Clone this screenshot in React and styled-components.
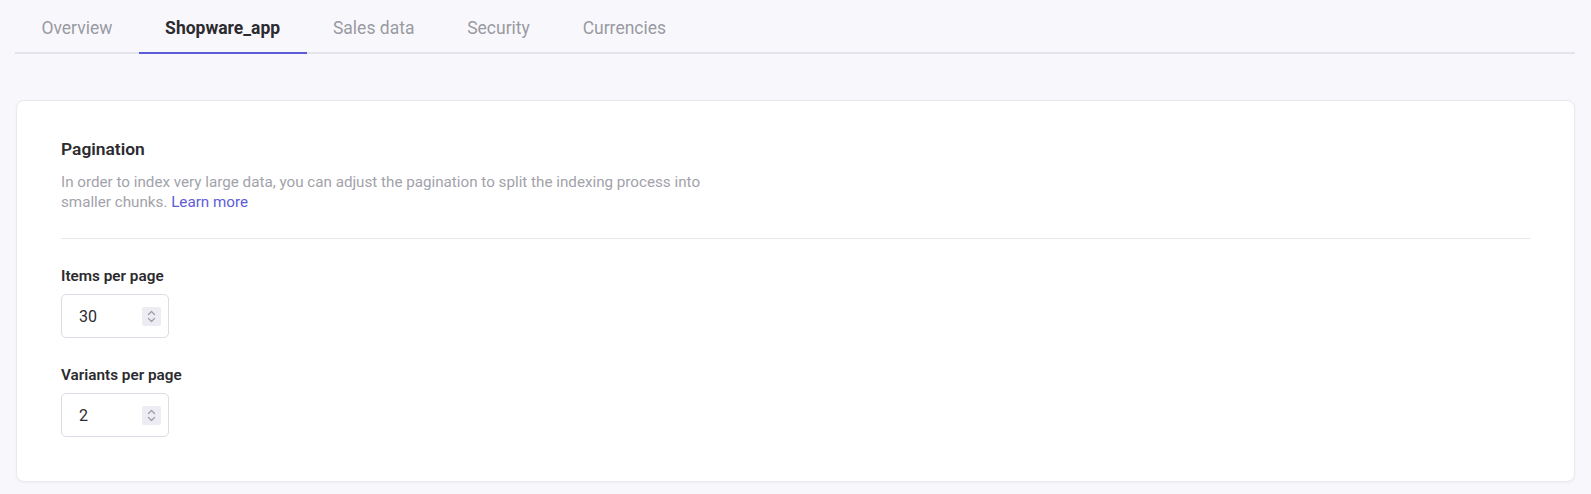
import React from "react";
import styled, { createGlobalStyle } from "styled-components";

const Global = createGlobalStyle`
  html, body { margin: 0; padding: 0; background: #f8f8fc; }
  body { font-family: Roboto, "Liberation Sans", Arial, sans-serif; color: #2d2d33; }
  * { box-sizing: border-box; }
`;

const Page = styled.div`
  padding: 10px 16px 13px 15px;
  display: flex;
  flex-direction: column;
  gap: 46px;
`;

const TabBar = styled.nav`
  display: flex;
  border-bottom: 2px solid #e4e4ec;
  height: 44px;
`;

const Tab = styled.div`
  padding: 0 26.4px;
  font-size: 17.5px;
  line-height: 20px;
  padding-top: 8px;
  color: ${(p) => (p.$active ? "#2b2b30" : "#9a9aa2")};
  font-weight: ${(p) => (p.$active ? 700 : 400)};
  margin-bottom: -2px;
  border-bottom: 2px solid ${(p) => (p.$active ? "#5d5cd8" : "transparent")};
  white-space: nowrap;
`;

const Card = styled.section`
  background: #fff;
  border: 1px solid #e9e9f0;
  border-radius: 8px;
  box-shadow: 0 1px 3px rgba(40, 40, 90, 0.05);
  padding: 38px 44px 44px 44px;
  margin-left: 1px;
`;

const Title = styled.h2`
  margin: 0;
  font-size: 17.4px;
  line-height: 20px;
  font-weight: 600;
  color: #2b2b30;
`;

const Desc = styled.p`
  margin: 13px 0 0;
  font-size: 15.2px;
  line-height: 20px;
  color: #a2a2aa;
  max-width: 680px;
`;

const Link = styled.a`
  color: #5d5cd8;
  text-decoration: none;
`;

const Divider = styled.hr`
  border: none;
  border-top: 1px solid #e6e6ec;
  margin: 26px 0 27px;
`;

const Fields = styled.div`
  display: flex;
  flex-direction: column;
  gap: 27px;
`;

const Field = styled.div`
  display: flex;
  flex-direction: column;
  gap: 8px;
`;

const Label = styled.label`
  font-size: 15.3px;
  line-height: 20px;
  font-weight: 600;
  color: #2b2b30;
`;

const NumberBox = styled.div`
  width: 108px;
  height: 44px;
  border: 1px solid #dcdce4;
  border-radius: 5px;
  display: flex;
  align-items: center;
  justify-content: space-between;
  padding: 0 7px 0 17px;
  background: #fff;
`;

const Value = styled.span`
  font-size: 16px;
  color: #2b2b30;
`;

const Spinner = styled.div`
  width: 19px;
  height: 19px;
  background: #ececf2;
  border-radius: 2px;
  display: flex;
  align-items: center;
  justify-content: center;
`;

const NumberInput = ({ value }) => (
  <NumberBox>
    <Value>{value}</Value>
    <Spinner>
      <svg width="9" height="13" viewBox="0 0 9 13" fill="none" stroke="#9c9ca6" strokeWidth="1.2" strokeLinecap="round" strokeLinejoin="round">
        <path d="M1.5 4.5 L4.5 1.5 L7.5 4.5" />
        <path d="M1.5 8.5 L4.5 11.5 L7.5 8.5" />
      </svg>
    </Spinner>
  </NumberBox>
);

const tabs = ["Overview", "Shopware_app", "Sales data", "Security", "Currencies"];

export default function App() {
  return (
    <>
      <Global />
      <Page>
        <TabBar>
          {tabs.map((t) => (
            <Tab key={t} $active={t === "Shopware_app"}>{t}</Tab>
          ))}
        </TabBar>
        <Card>
          <Title>Pagination</Title>
          <Desc>
            In order to index very large data, you can adjust the pagination to split the indexing process into smaller chunks.{" "}
            <Link href="#">Learn more</Link>
          </Desc>
          <Divider />
          <Fields>
            <Field>
              <Label>Items per page</Label>
              <NumberInput value="30" />
            </Field>
            <Field>
              <Label>Variants per page</Label>
              <NumberInput value="2" />
            </Field>
          </Fields>
        </Card>
      </Page>
    </>
  );
}
